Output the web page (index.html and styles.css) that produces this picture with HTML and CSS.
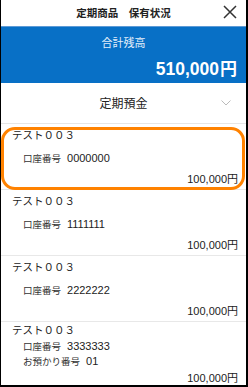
FILE: index.html
```html
<!DOCTYPE html>
<html lang="ja">

<head>
  <meta charset="utf-8">
  <title>定期商品 保有状況</title>
  <link rel="stylesheet" href="styles.css">
</head>

<body>
  <div class="screen">
    <div class="topbar">
      <h1 class="topbar-title">定期商品　保有状況</h1>
      <span class="close">
        <svg width="14" height="14" viewBox="0 0 14 14">
          <path d="M1 1 L13 13 M13 1 L1 13" stroke="#333" stroke-width="1.5" fill="none" />
        </svg>
      </span>
    </div>

    <div class="total">
      <p class="total-label">合計残高</p>
      <p class="total-amount">510,000<span class="yen">円</span></p>
    </div>

    <div class="category">
      定期預金
      <span class="chevron">
        <svg width="10" height="6" viewBox="0 0 10 6">
          <path d="M0.5 0.5 L5 5 L9.5 0.5" stroke="#bbb" stroke-width="1" fill="none" />
        </svg>
      </span>
    </div>

    <ul class="accounts">
      <li class="account highlight">
        <div class="account-name">テスト００３</div>
        <div class="account-row"><span class="row-label">口座番号</span>0000000</div>
        <div class="account-amount">100,000円</div>
      </li>
      <li class="account">
        <div class="account-name">テスト００３</div>
        <div class="account-row"><span class="row-label">口座番号</span>1111111</div>
        <div class="account-amount">100,000円</div>
      </li>
      <li class="account">
        <div class="account-name">テスト００３</div>
        <div class="account-row"><span class="row-label">口座番号</span>2222222</div>
        <div class="account-amount">100,000円</div>
      </li>
      <li class="account compact">
        <div class="account-name">テスト００３</div>
        <div class="account-row"><span class="row-label">口座番号</span>3333333</div>
        <div class="account-row"><span class="row-label">お預かり番号</span>01</div>
        <div class="account-amount">100,000円</div>
      </li>
    </ul>
  </div>
</body>

</html>
```

FILE: styles.css
```css
body {
  margin: 0;
  font-family: 'Liberation Sans', 'Noto Sans CJK JP', sans-serif;
  color: #333;
  background-color: #fff;
}

.screen {
  height: 387px;
  box-sizing: border-box;
  border-left: 1px solid #000;
  border-right: 2px solid #000;
  border-bottom: 2px solid #000;
  overflow: hidden;
}

.topbar {
  position: relative;
  height: 26px;
  display: flex;
  align-items: center;
  justify-content: center;
}

.topbar-title {
  margin: 0;
  font-size: 10.5px;
  font-weight: bold;
  color: #222;
  line-height: 14px;
}

.close {
  position: absolute;
  right: 9px;
  top: 5px;
  width: 14px;
  height: 14px;
}

.close svg {
  display: block;
}

.total {
  height: 57px;
  box-sizing: border-box;
  padding: 8px 9px 0 9px;
  background-color: #0870c6;
  border-top: 1px solid #5d9ad6;
  color: #fff;
}

.total-label {
  margin: 0;
  text-align: center;
  font-size: 11px;
  line-height: 16px;
  color: #e3eefa;
}

.total-amount {
  margin: 7px 0 0 0;
  text-align: right;
  font-size: 17.5px;
  font-weight: bold;
  line-height: 22px;
}

.total-amount .yen {
  font-size: 17px;
  margin-left: 1px;
}

.category {
  position: relative;
  height: 40px;
  padding-top: 1px;
  line-height: 40px;
  box-sizing: border-box;
  text-align: center;
  font-size: 12px;
  color: #222;
  border-bottom: 1px solid #e6e6e6;
  height: 41px;
}

.chevron {
  position: absolute;
  right: 15px;
  top: 17px;
  width: 10px;
  height: 6px;
}

.chevron svg {
  display: block;
}

.accounts {
  list-style: none;
  margin: 0;
  padding: 0;
}

.account {
  position: relative;
  height: 66px;
  box-sizing: border-box;
  padding: 4px 8px 0 11px;
  border-bottom: 1px solid #e8e8e8;
}

.account-name {
  font-size: 10.5px;
  line-height: 14px;
  color: #222;
}

.account-row {
  margin-top: 8px;
  padding-left: 11px;
  font-size: 11px;
  line-height: 16px;
  color: #222;
}

.row-label {
  font-size: 9.5px;
  color: #333;
  margin-right: 6px;
}

.account-amount {
  margin-top: 4px;
  text-align: right;
  font-size: 11px;
  line-height: 16px;
  color: #222;
}

.compact {
  padding-top: 1px;
}

.compact .account-row {
  margin-top: 2px;
  line-height: 15px;
}

.compact .account-row + .account-row {
  margin-top: 0;
}

.compact .account-amount {
  margin-top: 1px;
}

.highlight::after {
  content: "";
  position: absolute;
  top: 3px;
  left: 0;
  right: 1px;
  bottom: -1px;
  border: 3px solid #ff8200;
  border-radius: 14px;
}
```
